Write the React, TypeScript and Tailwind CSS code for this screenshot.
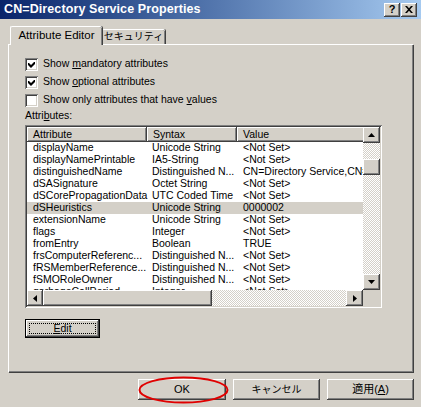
const raised =
  "bg-[#d4d0c8] shadow-[inset_-1px_-1px_#404040,inset_1px_1px_#ffffff,inset_-2px_-2px_#808080,inset_2px_2px_#d4d0c8]";
const sunken =
  "shadow-[inset_1px_1px_#808080,inset_-1px_-1px_#ffffff,inset_2px_2px_#404040,inset_-2px_-2px_#d4d0c8]";
const dither =
  "bg-[repeating-conic-gradient(#d4d0c8_0%_25%,#ffffff_0%_50%)] bg-[length:2px_2px]";

type Row = { name: string; syntax: string; value: string; selected?: boolean };

const rows: Row[] = [
  { name: "displayName", syntax: "Unicode String", value: "<Not Set>" },
  { name: "displayNamePrintable", syntax: "IA5-String", value: "<Not Set>" },
  { name: "distinguishedName", syntax: "Distinguished N...", value: "CN=Directory Service,CN=Windows NT,CN=Services" },
  { name: "dSASignature", syntax: "Octet String", value: "<Not Set>" },
  { name: "dSCorePropagationData", syntax: "UTC Coded Time", value: "<Not Set>" },
  { name: "dSHeuristics", syntax: "Unicode String", value: "0000002", selected: true },
  { name: "extensionName", syntax: "Unicode String", value: "<Not Set>" },
  { name: "flags", syntax: "Integer", value: "<Not Set>" },
  { name: "fromEntry", syntax: "Boolean", value: "TRUE" },
  { name: "frsComputerReferenc...", syntax: "Distinguished N...", value: "<Not Set>" },
  { name: "fRSMemberReference...", syntax: "Distinguished N...", value: "<Not Set>" },
  { name: "fSMORoleOwner", syntax: "Distinguished N...", value: "<Not Set>" },
  { name: "garbageCollPeriod", syntax: "Integer", value: "<Not Set>" },
];

function Arrow({ dir }: { dir: "up" | "down" | "left" | "right" }) {
  const pts = {
    up: "0,4 7,4 3.5,0",
    down: "0,0 7,0 3.5,4",
    left: "4,0 4,7 0,3.5",
    right: "0,0 0,7 4,3.5",
  }[dir];
  const vertical = dir === "up" || dir === "down";
  return (
    <svg width={vertical ? 7 : 4} height={vertical ? 4 : 7} viewBox={vertical ? "0 0 7 4" : "0 0 4 7"}>
      <polygon points={pts} fill="#000" />
    </svg>
  );
}

function Checkbox({ checked, children }: { checked: boolean; children: React.ReactNode }) {
  return (
    <div className="flex h-[18px] items-center gap-[5px]">
      <div className={`h-[13px] w-[13px] bg-white ${sunken}`}>
        {checked && (
          <svg width="13" height="13" viewBox="0 0 13 13">
            <path d="M3 5h1l2 2l3-3h1v2l-4 4l-3-3z" fill="#000" />
          </svg>
        )}
      </div>
      <span>{children}</span>
    </div>
  );
}

function Button({ children, className = "" }: { children: React.ReactNode; className?: string }) {
  return (
    <div className={`flex items-center justify-center font-normal ${raised} ${className}`}>
      {children}
    </div>
  );
}

export default function App() {
  return (
    <div className="flex h-[407px] w-[421px] flex-col overflow-hidden bg-[#d4d0c8] font-['Liberation_Sans','Noto_Sans_CJK_JP',sans-serif] text-[10.5px] text-black">
      {/* Title bar */}
      <div className="flex h-[19px] shrink-0 items-center justify-between bg-gradient-to-r from-[#0a246a] to-[#a6caf0] pl-[4px] pr-[4px]">
        <span className="text-[12.5px] font-bold tracking-[0.1px] text-white">
          CN=Directory Service Properties
        </span>
        <div className="flex">
          <Button className="h-[14px] w-[16px] text-[11px] !font-bold leading-none">?</Button>
          <Button className="ml-[1px] h-[14px] w-[16px]">
            <svg width="8" height="7" viewBox="0 0 8 7">
              <path d="M0 0h2l2 2.2L6 0h2L5 3.5L8 7H6L4 4.8L2 7H0l3-3.5z" fill="#000" />
            </svg>
          </Button>
        </div>
      </div>

      {/* Tabs */}
      <div className="flex items-end pl-[10px] pt-[7px]">
        <div className="relative z-10 -mb-[1px] flex h-[19px] w-[92px] items-center justify-center whitespace-nowrap rounded-t-[2px] border-l border-t border-white bg-[#d4d0c8] text-[11.5px] shadow-[inset_-1px_0_#808080,1px_0_#404040]">
          <span className="mt-[-1px]">Attribute Editor</span>
        </div>
        <div className="flex h-[15px] w-[63px] items-center justify-center whitespace-nowrap rounded-t-[2px] border-t border-white shadow-[inset_-1px_0_#808080,1px_0_#404040]">
          <span className="text-[10px] leading-none">セキュリティ</span>
        </div>
      </div>

      {/* Panel */}
      <div className="mx-[8px] flex h-[328px] flex-col border-l border-t border-white pl-[16px] pt-[10px] shadow-[inset_-1px_-1px_#808080,1px_1px_#404040]">
        <Checkbox checked>
          Show <u>m</u>andatory attributes
        </Checkbox>
        <Checkbox checked>
          Show <u>o</u>ptional attributes
        </Checkbox>
        <Checkbox checked={false}>
          Show only attributes that have <u>v</u>alues
        </Checkbox>
        <div className="flex h-[14px] items-center">
          Attri<u>b</u>utes:
        </div>

        {/* List view */}
        <div className={`mt-[2px] grid h-[183px] w-[357px] grid-cols-[336px_17px] grid-rows-[163px_16px] bg-white p-[2px] ${sunken}`}>
          <div className="overflow-hidden">
            <div className="flex h-[15px]">
              <div className={`flex w-[120px] shrink-0 items-center pl-[6px] ${raised}`}>Attribute</div>
              <div className={`flex w-[90px] shrink-0 items-center pl-[6px] ${raised}`}>Syntax</div>
              <div className={`flex w-[200px] shrink-0 items-center pl-[6px] ${raised}`}>Value</div>
            </div>
            {rows.map((r) => (
              <div
                key={r.name}
                className={`flex h-[12px] items-center whitespace-nowrap ${r.selected ? "bg-[#d4d0c8]" : ""}`}
              >
                <div className="w-[120px] shrink-0 pl-[6px]">{r.name}</div>
                <div className="w-[90px] shrink-0 pl-[5px]">{r.syntax}</div>
                <div className="shrink-0 pl-[6px]">{r.value}</div>
              </div>
            ))}
          </div>

          {/* Vertical scrollbar */}
          <div className={`flex flex-col ${dither}`}>
            <Button className="h-[16px] w-[17px]">
              <Arrow dir="up" />
            </Button>
            <div className="flex-1 pt-[16px]">
              <Button className="h-[16px] w-[17px]">{null}</Button>
            </div>
            <Button className="h-[16px] w-[17px]">
              <Arrow dir="down" />
            </Button>
          </div>

          {/* Horizontal scrollbar */}
          <div className={`flex ${dither}`}>
            <Button className="h-[16px] w-[16px]">
              <Arrow dir="left" />
            </Button>
            <Button className="h-[16px] w-[169px]">{null}</Button>
            <div className="flex-1" />
            <Button className="h-[16px] w-[17px]">
              <Arrow dir="right" />
            </Button>
          </div>
          <div className="bg-[#d4d0c8]" />
        </div>

        {/* Edit button */}
        <div className="mt-[11px] h-[19px] w-[75px] border border-black">
          <div className={`flex h-full w-full items-center justify-center p-[3px] ${raised}`}>
            <div className="flex h-full w-full items-center justify-center border border-dotted border-black">
              <span>
                <u>E</u>dit
              </span>
            </div>
          </div>
        </div>
      </div>

      {/* Bottom buttons */}
      <div className="flex justify-end gap-[7px] pr-[7px] pt-[7px]">
        <div className="relative">
          <Button className="h-[21px] w-[88px] text-[11px]">OK</Button>
          <svg className="absolute left-[0px] top-[-3px]" width="91" height="28" viewBox="0 0 91 28">
            <ellipse cx="45.5" cy="14" rx="44" ry="12.5" fill="none" stroke="#e00000" strokeWidth="2" />
          </svg>
        </div>
        <Button className="h-[21px] w-[87px] text-[10px]">キャンセル</Button>
        <Button className="h-[21px] w-[87px] text-[11px]">
          <span>
            適用(<u>A</u>)
          </span>
        </Button>
      </div>
    </div>
  );
}
